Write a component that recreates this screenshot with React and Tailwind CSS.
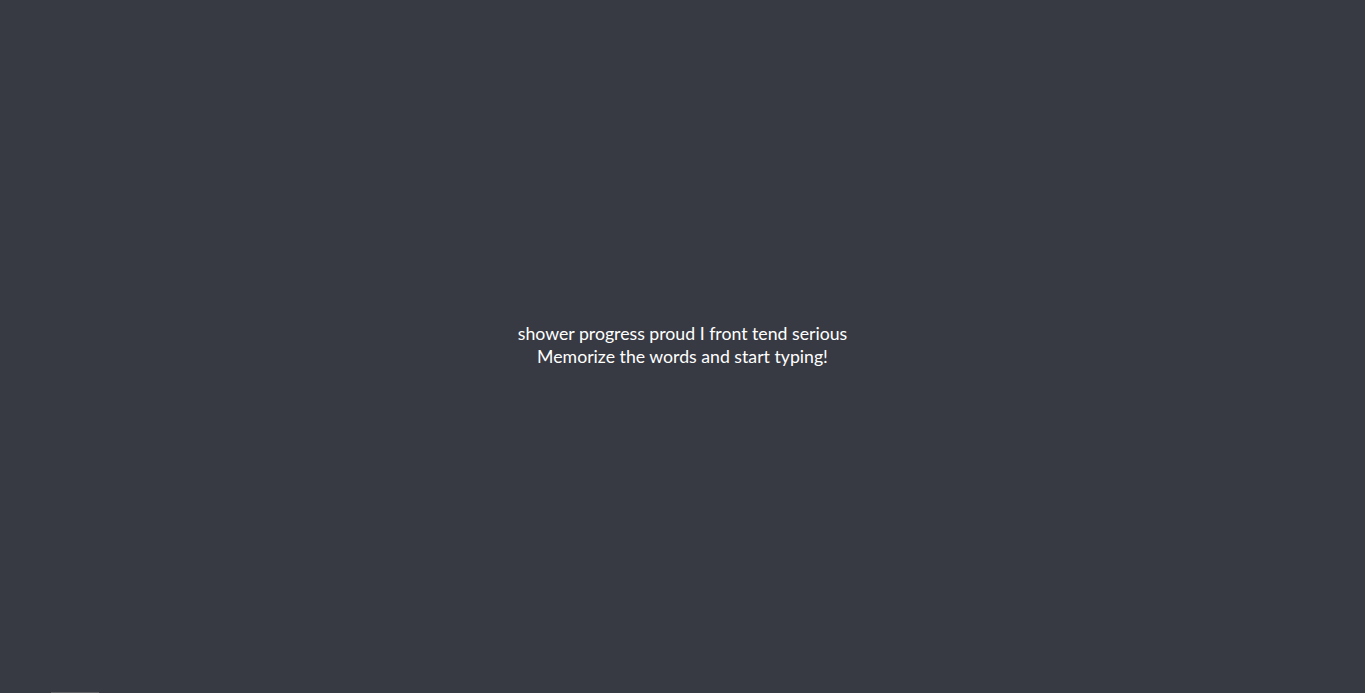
export default function App() {
  return (
    <div className="relative flex h-[693px] w-full flex-col items-center justify-center overflow-hidden bg-[#383a43] text-white font-['Lato','Noto_Sans',sans-serif]">
      <div className="mb-[4px] flex flex-col items-center text-[17.7px] leading-[23px]">
        <p>shower progress proud I front tend serious</p>
        <p>Memorize the words and start typing!</p>
      </div>
      <div className="absolute bottom-0 left-[51px] h-px w-[48px] bg-[#5d5e62]" />
    </div>
  )
}
